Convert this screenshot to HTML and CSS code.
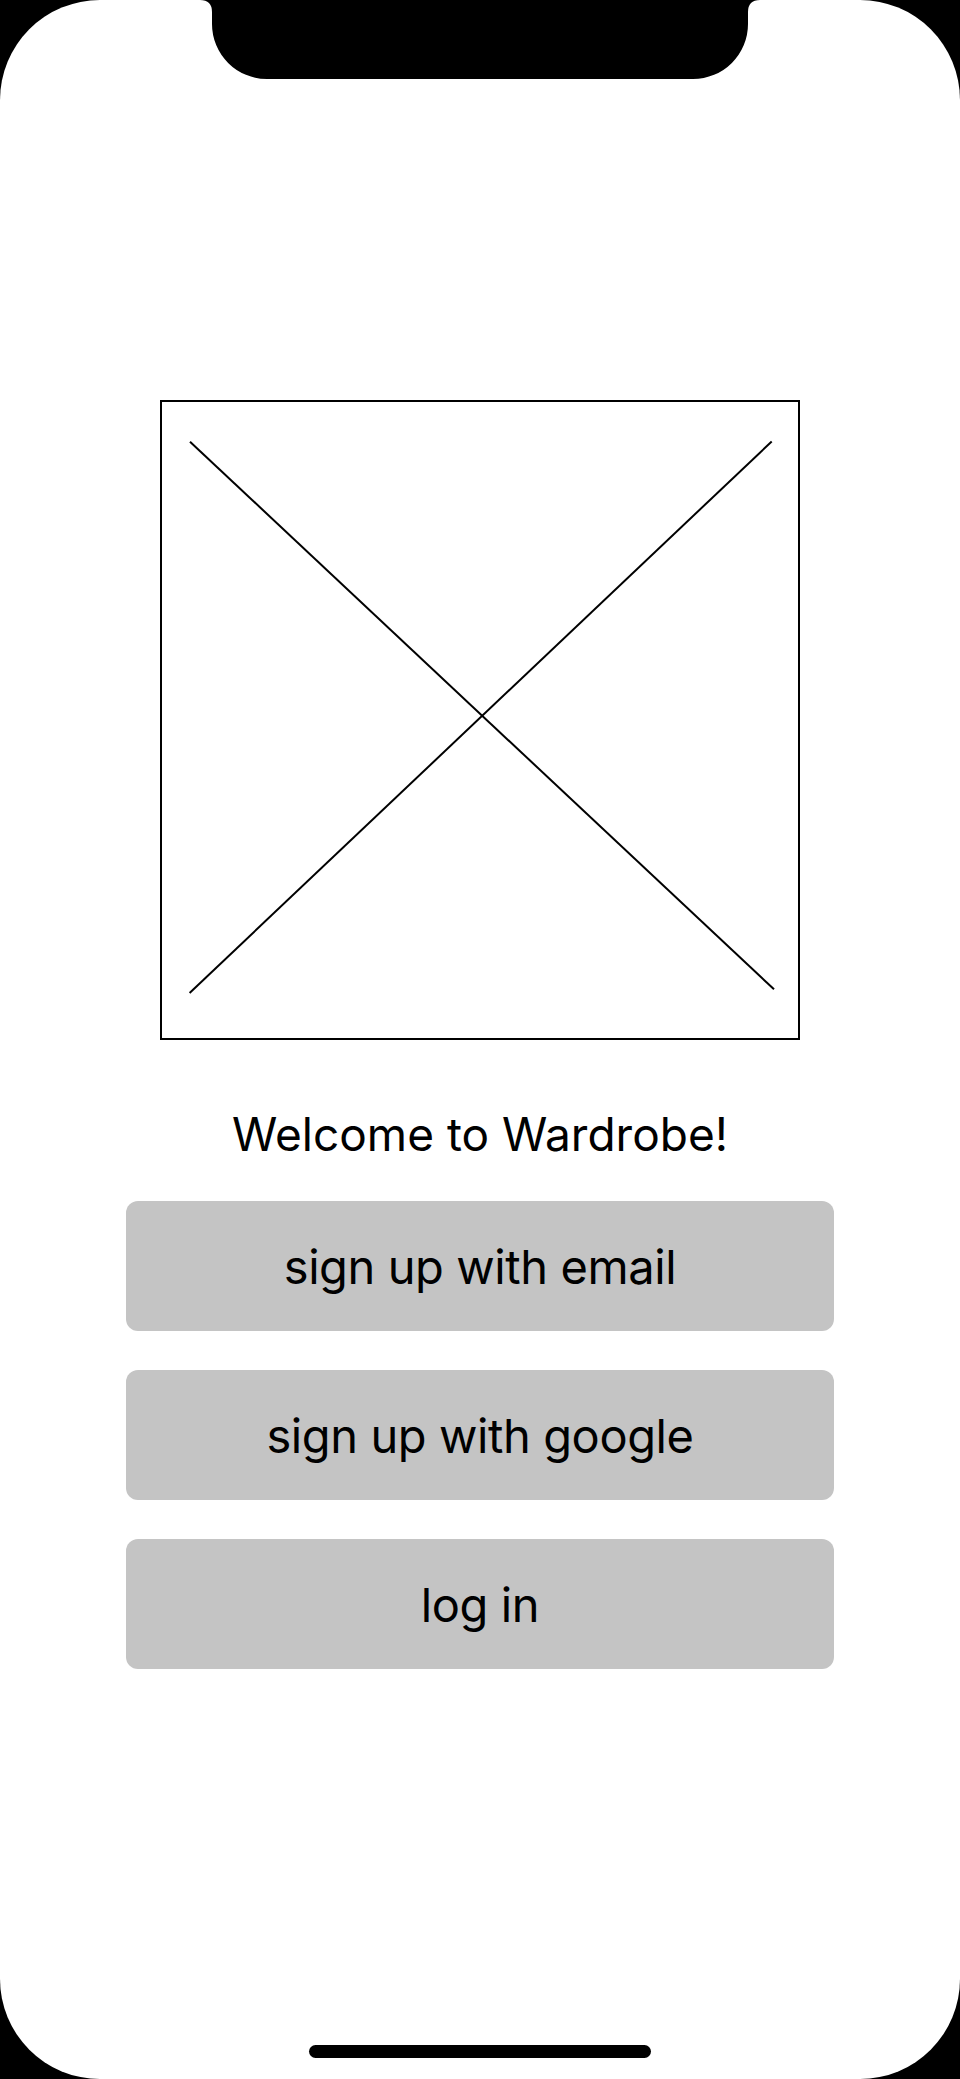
FILE: index.html
```html
<!DOCTYPE html>
<html lang="en">
<head>
<meta charset="utf-8">
<title>Wardrobe</title>
<link rel="stylesheet" href="styles.css">
</head>
<body>
<div class="screen">
  <svg class="notch" width="560" height="80" viewBox="200 0 560 80" aria-hidden="true">
    <path d="M200,0 H760 Q748,0 748,12 V24 A55,55 0 0 1 693,79 H267 A55,55 0 0 1 212,24 V12 Q212,0 200,0 Z" fill="#000"/>
  </svg>
  <main class="content">
    <div class="placeholder">
      <svg width="636" height="636" viewBox="0 0 636 636" aria-hidden="true">
        <line x1="28" y1="39.7" x2="612" y2="587.3" stroke="#000" stroke-width="2"/>
        <line x1="609.7" y1="39.5" x2="27.6" y2="591" stroke="#000" stroke-width="2"/>
      </svg>
    </div>
    <h1 class="welcome">Welcome to Wardrobe!</h1>
    <div class="actions">
      <button class="btn" type="button">sign up with email</button>
      <button class="btn" type="button">sign up with google</button>
      <button class="btn" type="button">log in</button>
    </div>
  </main>
  <div class="home-indicator"></div>
</div>
</body>
</html>
```
FILE: styles.css
```css
html, body {
  margin: 0;
  padding: 0;
  background: #000;
}

.screen {
  position: relative;
  width: 960px;
  height: 2079px;
  background: #fff;
  border-radius: 100px;
  overflow: hidden;
  font-family: Inter, "Noto Sans", "Liberation Sans", sans-serif;
  color: #000;
}

.notch {
  position: absolute;
  top: 0;
  left: 200px;
  display: block;
}

.content {
  display: flex;
  flex-direction: column;
  align-items: center;
  padding-top: 400px;
}

.placeholder {
  width: 640px;
  height: 640px;
  box-sizing: border-box;
  border: 2px solid #000;
}

.placeholder svg {
  display: block;
}

.welcome {
  margin: 66px 0 39px;
  font-size: 46px;
  line-height: 56px;
  font-weight: 400;
  letter-spacing: 0;
}

.actions {
  display: flex;
  flex-direction: column;
  gap: 39px;
  width: 708px;
}

.btn {
  height: 130px;
  border: none;
  border-radius: 12px;
  background: #c4c4c4;
  color: #000;
  font-family: Inter, "Noto Sans", "Liberation Sans", sans-serif;
  font-size: 47px;
  letter-spacing: -0.4px;
  font-weight: 400;
  padding: 0;
}

.home-indicator {
  position: absolute;
  left: 309px;
  bottom: 21px;
  width: 342px;
  height: 13px;
  border-radius: 7px;
  background: #000;
}
```
